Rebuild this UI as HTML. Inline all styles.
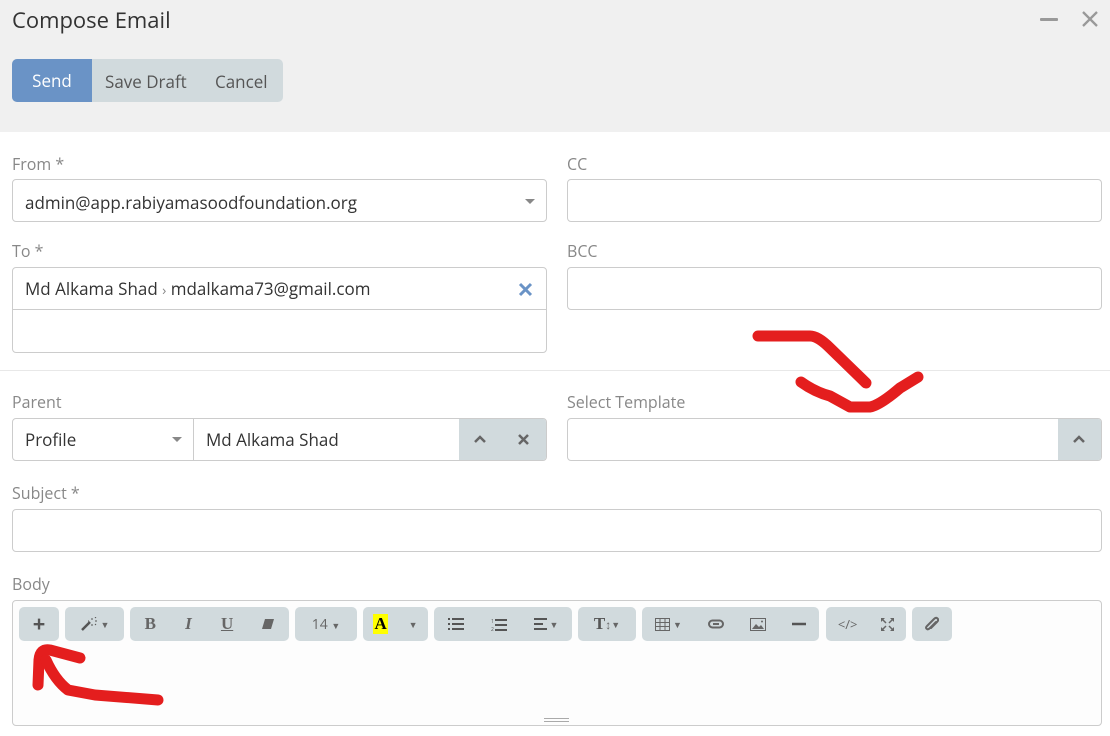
<!DOCTYPE html>
<html><head><meta charset="utf-8"><style>
*{box-sizing:border-box;margin:0;padding:0}
body{width:1110px;height:736px;overflow:hidden;background:#fff;font-family:"Open Sans","Liberation Sans",sans-serif;color:#333;position:relative}
.a{position:absolute}
.hdr{left:0;top:0;width:1110px;height:132px;background:#f0f0f0}
.lbl{font-size:16px;color:#888}
.inp{border:1px solid #ccc;border-radius:4px;background:#fff;font-size:17px;color:#333}
.tb{background:#d1dadd;border-radius:5px;height:34px;top:607px;color:#666;font-size:14px;display:flex;align-items:center;justify-content:space-around}
.tb svg{display:block}
</style></head><body>
<div class="a hdr"></div>
<div class="a" style="left:12px;top:5px;font-size:22px;color:#333">Compose Email</div>
<div class="a" style="left:1040px;top:18px;width:18px;height:3px;background:#999;border-radius:1px"></div>
<svg class="a" style="left:1081px;top:10px" width="18" height="18"><path d="M2 2L16 16M16 2L2 16" stroke="#999" stroke-width="2.3"/></svg>
<div class="a" style="left:12px;top:59px;width:271px;height:43px;background:#d1dadd;border-radius:5px"></div>
<div class="a" style="left:12px;top:59px;width:80px;height:43px;background:#6a93c6;border-radius:5px 0 0 5px;color:#fff;font-size:17px;text-align:center;line-height:43px">Send</div>
<div class="a" style="left:105px;top:70px;font-size:17px;color:#555">Save Draft</div>
<div class="a" style="left:215px;top:70px;font-size:17px;color:#555">Cancel</div>

<div class="a lbl" style="left:12px;top:153px">From *</div>
<div class="a inp" style="left:12px;top:179px;width:535px;height:43px;padding:11px 12px">admin@app.rabiyamasoodfoundation.org</div>
<div class="a" style="left:525px;top:199px;border:5px solid transparent;border-top:5px solid #888;border-bottom:0"></div>
<div class="a lbl" style="left:567px;top:153px">CC</div>
<div class="a inp" style="left:567px;top:179px;width:535px;height:43px"></div>

<div class="a lbl" style="left:12px;top:240px">To *</div>
<div class="a inp" style="left:12px;top:267px;width:535px;height:86px"></div>
<div class="a" style="left:13px;top:309px;width:533px;height:1px;background:#ccc"></div>
<div class="a" style="left:25px;top:277px;font-size:17px">Md Alkama Shad <span style="color:#888;font-size:14px">›</span> mdalkama73@gmail.com</div>
<svg class="a" style="left:518px;top:282px" width="15" height="15"><path d="M2 2L13 13M13 2L2 13" stroke="#6a93c6" stroke-width="3"/></svg>
<div class="a lbl" style="left:567px;top:240px">BCC</div>
<div class="a inp" style="left:567px;top:267px;width:535px;height:43px"></div>

<div class="a" style="left:0;top:370px;width:1110px;height:1px;background:#e8e8e8"></div>

<div class="a lbl" style="left:12px;top:391px">Parent</div>
<div class="a inp" style="left:12px;top:418px;width:535px;height:43px;overflow:hidden">
 <div class="a" style="left:180px;top:0;width:1px;height:43px;background:#ccc"></div>
 <div class="a" style="left:446px;top:0;width:89px;height:43px;background:#d1dadd"></div>
</div>
<div class="a" style="left:25px;top:428px;font-size:17px">Profile</div>
<div class="a" style="left:172px;top:437px;border:5px solid transparent;border-top:5px solid #888;border-bottom:0"></div>
<div class="a" style="left:206px;top:428px;font-size:17px">Md Alkama Shad</div>
<svg class="a" style="left:473px;top:433px" width="14" height="12"><path d="M2 9L7 4L12 9" stroke="#666" stroke-width="2.5" fill="none"/></svg>
<svg class="a" style="left:517px;top:433px" width="13" height="13"><path d="M2 2L11 11M11 2L2 11" stroke="#666" stroke-width="2.5"/></svg>
<div class="a lbl" style="left:567px;top:391px">Select Template</div>
<div class="a inp" style="left:567px;top:418px;width:535px;height:43px;overflow:hidden">
 <div class="a" style="left:490px;top:0;width:45px;height:43px;background:#d1dadd"></div>
</div>
<svg class="a" style="left:1072px;top:433px" width="14" height="12"><path d="M2 9L7 4L12 9" stroke="#666" stroke-width="2.5" fill="none"/></svg>

<div class="a lbl" style="left:12px;top:482px">Subject *</div>
<div class="a inp" style="left:12px;top:509px;width:1090px;height:43px"></div>

<div class="a lbl" style="left:12px;top:573px">Body</div>
<div class="a inp" style="left:12px;top:600px;width:1090px;height:126px;background:#fdfdfd"></div>
<div class="a" style="left:544px;top:718px;width:25px;height:4px;border-top:1px solid #aaa;border-bottom:1px solid #aaa"></div>

<div class="a tb" style="left:19px;width:40px;font-size:22px;font-weight:bold;color:#555">+</div>
<div class="a tb" style="left:65px;width:59px;justify-content:center;gap:3px">
 <svg width="18" height="14"><path d="M2 13L10 5" stroke="#555" stroke-width="2.5"/><path d="M12 1V3M15 4H17M12 7V9M8 4H9M15 7L16 8M15 1L16 0" stroke="#555" stroke-width="1"/></svg>
 <span style="font-size:9px">▼</span></div>
<div class="a tb" style="left:130px;width:159px;font-family:'Liberation Serif',serif;font-size:17px;font-weight:bold"><span>B</span><i>I</i><u>U</u>
 <svg width="12" height="10"><path d="M3 0H12L9 10H0Z" fill="#666"/></svg></div>
<div class="a tb" style="left:295px;width:62px;font-size:14px"><span>14 <span style="font-size:9px">▼</span></span></div>
<div class="a tb" style="left:363px;width:65px"><span style="background:#ff0;color:#000;font-family:'Liberation Serif',serif;font-weight:bold;font-size:17px;padding:0 1px">A</span><span style="font-size:9px">▼</span></div>
<div class="a tb" style="left:434px;width:138px">
 <svg width="16" height="12"><path d="M0 1H2M0 6H2M0 11H2M4 1H16M4 6H16M4 11H16" stroke="#555" stroke-width="2"/></svg>
 <svg width="16" height="13"><path d="M4 2H16M4 7H16M4 12H16" stroke="#555" stroke-width="2"/><text x="0" y="5" font-size="5" fill="#555">1</text><text x="0" y="13" font-size="5" fill="#555">2</text></svg>
 <span style="display:flex;align-items:center;gap:3px"><svg width="13" height="12"><path d="M0 1H13M0 6H9M0 11H13" stroke="#555" stroke-width="2"/></svg><span style="font-size:9px">▼</span></span></div>
<div class="a tb" style="left:578px;width:58px;justify-content:center"><span style="font-family:'Liberation Serif',serif;font-weight:bold;font-size:17px;color:#555">T</span><span style="font-size:12px">↕</span><span style="font-size:9px">▼</span></div>
<div class="a tb" style="left:642px;width:177px">
 <span style="display:flex;align-items:center;gap:3px"><svg width="15" height="13"><path d="M0.5 0.5H14.5V12.5H0.5ZM0 4.5H15M0 8.5H15M5 0V13M10 0V13" stroke="#666" fill="none"/></svg><span style="font-size:9px">▼</span></span>
 <svg width="16" height="10"><rect x="1" y="1.5" width="14" height="7" rx="3.5" stroke="#666" stroke-width="2" fill="none"/><path d="M5 5H11" stroke="#666" stroke-width="2"/></svg>
 <svg width="16" height="13"><rect x="0.5" y="0.5" width="15" height="12" stroke="#666" fill="none"/><path d="M2 11L6 6L9 9L11 7L14 11Z" fill="#666"/><circle cx="12" cy="3.5" r="1" fill="#666"/></svg>
 <svg width="14" height="4"><path d="M0 2H14" stroke="#555" stroke-width="2.5"/></svg></div>
<div class="a tb" style="left:826px;width:80px;font-size:13px"><span>&lt;/&gt;</span>
 <svg width="13" height="13"><path d="M1 1L5 5M12 1L8 5M1 12L5 8M12 12L8 8" stroke="#666" stroke-width="1.5"/><path d="M0 0H4L0 4ZM13 0H9L13 4ZM0 13H4L0 9ZM13 13H9L13 9Z" fill="#666"/></svg></div>
<div class="a tb" style="left:912px;width:40px">
 <svg width="14" height="16"><path d="M11 6L5 12Q3 14 2 13Q0 12 2 10L9 3Q11 1 12.5 2.5Q14 4 12 6L6 12" stroke="#666" stroke-width="2" fill="none" stroke-linecap="round"/></svg></div>

<svg class="a" style="left:0;top:0" width="1110" height="736">
<g stroke="#e41e1e" stroke-width="11" fill="none" stroke-linecap="round" stroke-linejoin="round">
<path d="M758 336L810 336Q818 336 830 348L866 383"/>
<path d="M801 382Q815 392 830 396L850 407L870 407Q880 405 900 388L918 377"/>
<path d="M38 685L39 660Q40 648 50 650L80 658"/>
<path d="M46 660Q55 680 68 690L95 695L158 700"/>
</g></svg>
</body></html>
